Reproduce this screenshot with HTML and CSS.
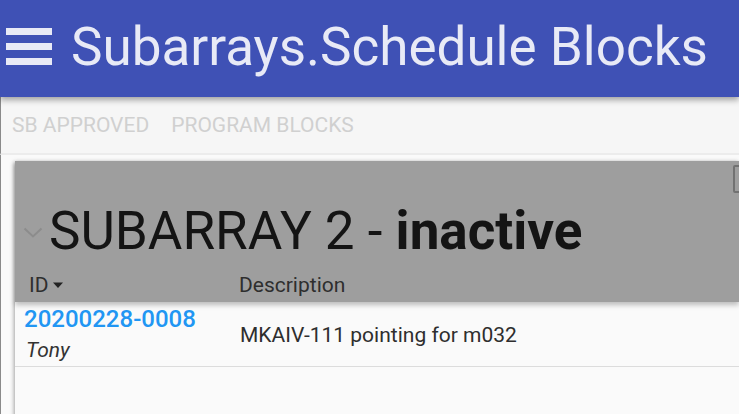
FILE: index.html
```html
<!DOCTYPE html>
<html>
<head>
<meta charset="utf-8">
<link rel="stylesheet" href="styles.css">
</head>
<body>
<header class="appbar">
  <svg class="menu" width="46" height="38" viewBox="0 0 46 38"><rect x="0" y="0" width="46" height="7" fill="#e8eaf6"/><rect x="0" y="15" width="46" height="7" fill="#e8eaf6"/><rect x="0" y="30" width="46" height="7" fill="#e8eaf6"/></svg>
  <h1 class="title">Subarrays.Schedule Blocks</h1>
</header>
<nav class="tabs">
  <span class="tab">SB Approved</span>
  <span class="tab">Program Blocks</span>
</nav>
<main class="content">
  <section class="card">
    <div class="card-head">
      <div class="check"></div>
      <div class="heading">
        <svg class="chev" width="20" height="12" viewBox="0 0 20 12"><path d="M1.5 1.5 L10 9.5 L18.5 1.5" fill="none" stroke="#8c8c8c" stroke-width="2"/></svg>
        <h2 class="subarray">SUBARRAY 2 - <b>inactive</b></h2>
      </div>
      <div class="cols">
        <span class="col col-id">ID <svg width="12" height="8" viewBox="0 0 12 8"><path d="M1 1.5 L11 1.5 L6 7 Z" fill="#222"/></svg></span>
        <span class="col col-desc">Description</span>
      </div>
    </div>
    <div class="row">
      <div class="cell-id">
        <a class="sb-id">20200228-0008</a>
        <span class="owner">Tony</span>
      </div>
      <div class="cell-desc">MKAIV-111 pointing for m032</div>
    </div>
  </section>
</main>
</body>
</html>
```
FILE: styles.css
```css
* { box-sizing: border-box; }
html, body { margin: 0; padding: 0; }
body {
  width: 739px;
  height: 414px;
  overflow: hidden;
  background: #fafafa;
  font-family: Roboto, "Liberation Sans", sans-serif;
}
.appbar {
  height: 97px;
  background: #3f51b5;
  display: flex;
  align-items: flex-start;
  padding: 17px 0 0 6px;
  gap: 19px;
  box-shadow: 0 3px 6px rgba(0,0,0,0.35);
  position: relative;
  z-index: 2;
}
.menu { margin-top: 11px; flex: none; }
.title {
  margin: 0;
  font-weight: 400;
  font-size: 53px;
  line-height: 60px;
  color: #e8eaf6;
  white-space: nowrap;
}
.tabs {
  height: 58px;
  background: #f6f6f6;
  display: flex;
  align-items: flex-start;
  gap: 22px;
  padding: 16px 0 0 11px;
  border-bottom: 2px solid #ececec;
  border-left: 1px solid #8a8a8a;
}
.tab {
  text-transform: uppercase;
  font-size: 21px;
  line-height: 24px;
  color: #d0d0d0;
}
.content {
  padding: 6px 0 0 14px;
  border-left: 1px solid #8a8a8a;
  height: 259px;
}
.card {
  background: #fafafa;
  box-shadow: -1px 1px 4px rgba(0,0,0,0.35);
  height: 260px;
}
.card-head {
  background: #9e9e9e;
  height: 141px;
  position: relative;
  display: flex;
  flex-direction: column;
  box-shadow: 0 3px 5px rgba(0,0,0,0.25);
  z-index: 1;
}
.check {
  position: absolute;
  right: -20px;
  top: 4px;
  width: 26px;
  height: 28px;
  border: 2px solid #727272;
  border-radius: 2px;
}
.heading {
  display: flex;
  align-items: flex-start;
  margin-top: 40px;
  padding-left: 8px;
}
.chev { margin: 26px 6px 0 0; flex: none; }
.subarray {
  margin: 0;
  font-weight: 400;
  font-size: 53px;
  line-height: 60px;
  color: #141414;
  white-space: nowrap;
}
.subarray b { font-weight: 700; }
.cols {
  display: flex;
  margin-top: 12px;
  font-size: 21px;
  line-height: 24px;
  color: #2e2e2e;
}
.col-id { width: 224px; padding-left: 14px; display: flex; align-items: center; gap: 3px; }
.row {
  display: flex;
  border-bottom: 1px solid #dcdcdc;
  height: 65px;
  background: #fafafa;
}
.cell-id {
  width: 225px;
  padding-left: 9px;
  padding-top: 3px;
  display: flex;
  flex-direction: column;
}
.sb-id {
  color: #2196f3;
  font-weight: 500;
  font-size: 24px;
  line-height: 28px;
}
.owner {
  font-style: italic;
  font-size: 21px;
  line-height: 24px;
  color: #333;
  margin-top: 5px;
  padding-left: 2px;
}
.cell-desc {
  font-size: 21px;
  line-height: 24px;
  color: #2e2e2e;
  padding-top: 21px;
}
```
